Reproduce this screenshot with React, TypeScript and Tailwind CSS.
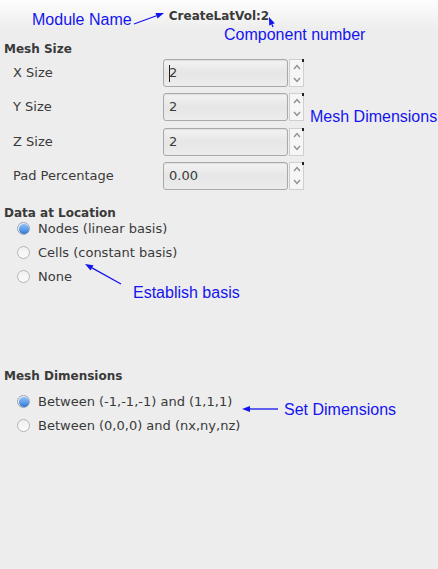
import React from "react";

const ui = { fontFamily: '"DejaVu Sans", "Liberation Sans", sans-serif' };
const ann = { fontFamily: '"Liberation Sans", Arial, sans-serif' };

function SpinBox({ value, caret }: { value: string; caret?: boolean }) {
  return (
    <div className="flex h-[28px] items-stretch">
      <div className="relative w-[125px] rounded-[3px] border border-[#a9a9a9] bg-gradient-to-b from-[#f3f3f3] via-[#e6e6e6] to-[#ececec] shadow-[inset_0_1px_1px_rgba(0,0,0,0.08)] flex items-center pl-[5px] text-[13px] text-[#3a3a3a]">
        <span className="leading-[16px]">{value}</span>
        {caret && <span className="absolute left-[5px] top-[5px] h-[17px] w-px bg-[#222]" />}
      </div>
      <div className="relative ml-[1px] flex w-[15px] flex-col border border-[#cfcfcf] bg-[#f6f6f6]">
        <div className="flex flex-1 items-center justify-center">
          <svg width="8" height="6" viewBox="0 0 8 6">
            <path d="M1 5 L4 1.5 L7 5" fill="none" stroke="#909090" strokeWidth="1.4" />
          </svg>
        </div>
        <div className="flex flex-1 items-center justify-center">
          <svg width="8" height="6" viewBox="0 0 8 6">
            <path d="M1 1 L4 4.5 L7 1" fill="none" stroke="#909090" strokeWidth="1.4" />
          </svg>
        </div>
        <span className="absolute right-[-1px] top-[-1px] h-[3px] w-[2px] bg-[#222]" />
      </div>
    </div>
  );
}

function Radio({ checked, label }: { checked?: boolean; label: string }) {
  return (
    <div className="flex h-[24px] items-center pl-[17px]">
      {checked ? (
        <span className="flex h-[13px] w-[13px] items-center justify-center rounded-full border border-[#9aa6b4] bg-[#e8eef6]">
          <span className="h-[10px] w-[10px] rounded-full bg-gradient-to-b from-[#8fc0f5] to-[#2f7ee0] shadow-[inset_0_-1px_1px_rgba(0,0,0,0.15)]" />
        </span>
      ) : (
        <span className="h-[13px] w-[13px] rounded-full border border-[#b5b5b5] bg-gradient-to-b from-[#f0f0f0] to-[#fbfbfb]" />
      )}
      <span className="ml-[8px] text-[13px] leading-[16px] text-[#3a3a3a]">{label}</span>
    </div>
  );
}

function Arrow({ x1, y1, x2, y2 }: { x1: number; y1: number; x2: number; y2: number }) {
  const dx = x2 - x1;
  const dy = y2 - y1;
  const len = Math.hypot(dx, dy);
  const ux = dx / len;
  const uy = dy / len;
  const hl = 8;
  const hw = 3;
  const bx = x2 - ux * hl;
  const by = y2 - uy * hl;
  const p1 = `${bx - uy * hw},${by + ux * hw}`;
  const p2 = `${bx + uy * hw},${by - ux * hw}`;
  return (
    <g>
      <line x1={x1} y1={y1} x2={bx} y2={by} stroke="#1414f0" strokeWidth="1.3" />
      <polygon points={`${x2},${y2} ${p1} ${p2}`} fill="#1414f0" />
    </g>
  );
}

export default function App() {
  const rows = [
    { label: "X Size", value: "2", caret: true },
    { label: "Y Size", value: "2" },
    { label: "Z Size", value: "2" },
    { label: "Pad Percentage", value: "0.00" },
  ];
  return (
    <div className="relative h-[569px] w-[438px] overflow-hidden bg-[#ededed]" style={ui}>
      <div className="h-[30px] bg-gradient-to-b from-[#fdfdfd] to-[#ededed] pt-[3px] text-center">
        <span className="text-[12px] font-bold leading-[14px] text-[#3a3a3a]">CreateLatVol:2</span>
      </div>

      <div className="mt-[11px] pl-[4px] text-[12px] font-bold leading-[16px] text-[#3a3a3a]">Mesh Size</div>
      <div className="mt-[2px] flex flex-col gap-[6.33px]">
        {rows.map((r) => (
          <div key={r.label} className="flex h-[28px] items-center">
            <span className="w-[163px] pl-[13px] text-[13px] leading-[16px] text-[#3a3a3a]">{r.label}</span>
            <SpinBox value={r.value} caret={r.caret} />
          </div>
        ))}
      </div>

      <div className="mt-[15px] pl-[4px] text-[12px] font-bold leading-[16px] text-[#3a3a3a]">Data at Location</div>
      <div className="-mt-[4px] flex flex-col">
        <Radio checked label="Nodes (linear basis)" />
        <Radio label="Cells (constant basis)" />
        <Radio label="None" />
      </div>

      <div className="mt-[79px] pl-[4px] text-[12px] font-bold leading-[16px] text-[#3a3a3a]">Mesh Dimensions</div>
      <div className="mt-[6px] flex flex-col">
        <Radio checked label="Between (-1,-1,-1) and (1,1,1)" />
        <Radio label="Between (0,0,0) and (nx,ny,nz)" />
      </div>

      <div className="pointer-events-none absolute inset-0 text-[16px] leading-[18px] text-[#1414f0]" style={ann}>
        <span className="absolute left-[32px] top-[11px]">Module Name</span>
        <span className="absolute left-[224px] top-[26px]">Component number</span>
        <span className="absolute left-[310px] top-[108px]">Mesh Dimensions</span>
        <span className="absolute left-[133px] top-[284px]">Establish basis</span>
        <span className="absolute left-[284px] top-[401px]">Set Dimensions</span>
        <svg className="absolute left-0 top-0" width="438" height="569">
          <Arrow x1={134} y1={24} x2={164} y2={13} />
          <Arrow x1={273} y1={27} x2={269} y2={17} />
          <Arrow x1={121} y1={284} x2={85} y2={264} />
          <Arrow x1={278} y1={409} x2={242} y2={409} />
        </svg>
      </div>
    </div>
  );
}
